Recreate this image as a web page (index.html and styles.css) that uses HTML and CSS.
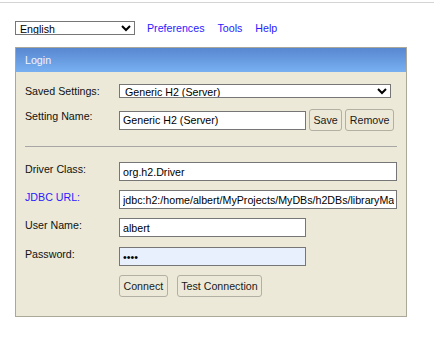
FILE: index.html
```html
<!DOCTYPE html>
<html>
<head>
<meta charset="utf-8">
<link rel="stylesheet" href="styles.css">
</head>
<body>
<div class="topline"></div>
<div class="toolbar">
  <select class="lang"><option>English</option></select>
  <a href="#" class="tlink first">Preferences</a>
  <a href="#" class="tlink">Tools</a>
  <a href="#" class="tlink">Help</a>
</div>
<div class="panel">
  <div class="panel-head">Login</div>
  <div class="panel-body">
    <div class="row r-saved">
      <label class="lbl">Saved Settings:</label>
      <select class="sel-wide"><option>Generic H2 (Server)</option></select>
    </div>
    <div class="row top r-name">
      <label class="lbl">Setting Name:</label>
      <input class="inp short mid" type="text" value="Generic H2 (Server)">
      <button class="btn b-save">Save</button>
      <button class="btn">Remove</button>
    </div>
    <div class="sep"></div>
    <div class="row top r-field first-field">
      <label class="lbl">Driver Class:</label>
      <input class="inp long" type="text" value="org.h2.Driver">
    </div>
    <div class="row top r-field">
      <a href="#" class="lbl link-lbl">JDBC URL:</a>
      <input class="inp long" type="text" value="jdbc:h2:/home/albert/MyProjects/MyDBs/h2DBs/libraryManager">
    </div>
    <div class="row top r-field">
      <label class="lbl">User Name:</label>
      <input class="inp short" type="text" value="albert">
    </div>
    <div class="row top r-field r-pass">
      <label class="lbl">Password:</label>
      <input class="inp short autofill" type="password" value="1234">
    </div>
    <div class="row r-actions">
      <span class="lbl"></span>
      <button class="btn">Connect</button>
      <button class="btn b-test">Test Connection</button>
    </div>
  </div>
</div>
</body>
</html>
```

FILE: styles.css
```css
html, body {
  margin: 0;
  padding: 0;
  background: #ffffff;
}
body {
  font-family: "Liberation Sans", Arial, sans-serif;
  font-size: 10.67px;
  color: #000;
}
.topline {
  margin-top: 2px;
  height: 1px;
  background: #d4d4d4;
}
.toolbar {
  display: flex;
  align-items: center;
  margin: 18px 0 0 15px;
  height: 14px;
}
.lang {
  width: 120px;
  height: 14px;
  font: 10.67px "Liberation Sans", Arial, sans-serif;
  border: 1px solid #767676;
  border-radius: 0;
  padding: 0;
  margin: 0;
  background: #fff;
  color: #000;
}
.tlink {
  color: #2a1aff;
  text-decoration: none;
  margin-left: 13px;
}
.tlink.first {
  margin-left: 12px;
}
.panel {
  margin: 12px 0 0 15px;
  width: 390px;
  border: 1px solid #aca899;
  background: #ece9d8;
}
.panel-head {
  height: 24px;
  line-height: 24px;
  padding-left: 9px;
  color: #f2f4fa;
  background: linear-gradient(#5887d0, #78b0f2);
}
.panel-body {
  padding: 12px 9px 19px 9px;
}
.row {
  display: flex;
  align-items: center;
}
.row.top {
  align-items: flex-start;
}
.row.top .lbl {
  margin-top: 1px;
}
.lbl {
  width: 94px;
  flex: none;
  color: #111;
}
.link-lbl {
  color: #2a1aff;
  text-decoration: none;
}
.sel-wide {
  width: 272px;
  height: 14px;
  font: 10.67px "Liberation Sans", Arial, sans-serif;
  border: 1px solid #767676;
  border-radius: 0;
  padding: 0 0 0 1px;
  margin: 0;
  background: #fff;
  color: #000;
}
.r-name {
  margin-top: 11px;
}
.inp {
  box-sizing: border-box;
  height: 19px;
  border: 1px solid #767676;
  padding: 0 2px 0 3px;
  margin: 0;
  font: 10.67px "Liberation Sans", Arial, sans-serif;
  color: #000;
  background: #fff;
  outline: none;
}
.inp.mid {
  align-self: center;
}
.inp.short {
  width: 187px;
}
.inp.long {
  width: 279px;
}
.inp.autofill {
  background: #e8f0fe;
}
.btn {
  box-sizing: border-box;
  height: 22px;
  padding: 0 3.5px;
  margin: 0;
  border: 1px solid #b2afa3;
  border-radius: 3px;
  background: #ece9d8;
  font: 10.67px "Liberation Sans", Arial, sans-serif;
  color: #1a1a1a;
}
.b-save {
  margin-left: 3px;
  margin-right: 3px;
}
.b-test {
  margin-left: 9px;
}
.sep {
  height: 1px;
  background: #a6a6a6;
  margin: 15px 0 15px 0;
  width: 372px;
}
.r-field + .r-field {
  margin-top: 9px;
}
.r-field.r-pass {
  margin-top: 10px;
}
.r-actions {
  margin-top: 9px;
}
```
